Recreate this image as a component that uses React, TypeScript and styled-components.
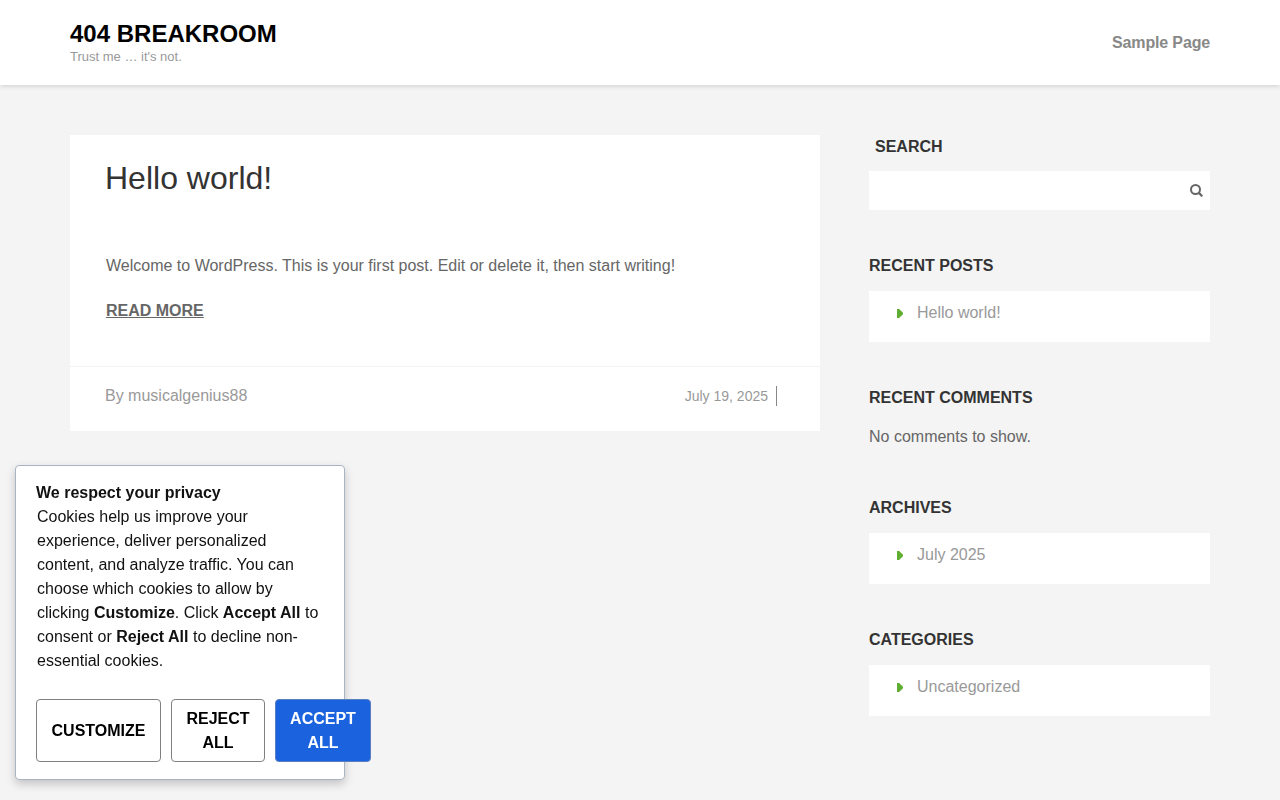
import React from "react";
import styled, { createGlobalStyle } from "styled-components";

const GlobalStyle = createGlobalStyle`
  * { box-sizing: border-box; }
  html, body { margin: 0; padding: 0; }
  body {
    background: #f4f4f4;
    font-family: "Liberation Sans", Arial, sans-serif;
    color: #5f5f5f;
  }
`;

const widgets = [
  { title: "RECENT POSTS", items: ["Hello world!"] },
  { title: "RECENT COMMENTS", text: "No comments to show." },
  { title: "ARCHIVES", items: ["July 2025"] },
  { title: "CATEGORIES", items: ["Uncategorized"] },
];

const SearchIcon = () => (
  <svg width="14" height="14" viewBox="0 0 14 14" fill="none" stroke="#666">
    <circle cx="6.5" cy="6.5" r="4.5" strokeWidth="2" />
    <path d="M10 10l2.6 2.6" strokeWidth="2.2" strokeLinecap="round" />
  </svg>
);

export default function App() {
  return (
    <>
      <GlobalStyle />
      <Header>
        <Brand>
          <SiteTitle>404 BREAKROOM</SiteTitle>
          <Tagline>Trust me … it's not.</Tagline>
        </Brand>
        <NavLink href="#">Sample Page</NavLink>
      </Header>

      <Page>
        <Main>
          <PostBody>
            <PostTitle>Hello world!</PostTitle>
            <Excerpt>
              Welcome to WordPress. This is your first post. Edit or delete it,
              then start writing!
            </Excerpt>
            <ReadMore href="#">READ MORE</ReadMore>
          </PostBody>
          <PostFooter>
            <Author>By musicalgenius88</Author>
            <PostDate>July 19, 2025</PostDate>
          </PostFooter>
        </Main>

        <Sidebar>
          <SearchWidget>
            <SearchTitle>SEARCH</SearchTitle>
            <SearchBox>
              <SearchIcon />
            </SearchBox>
          </SearchWidget>

          {widgets.map((w) => (
            <Widget key={w.title}>
              <WidgetTitle>{w.title}</WidgetTitle>
              {w.text && <WidgetText>{w.text}</WidgetText>}
              {w.items && (
                <WidgetList>
                  {w.items.map((item) => (
                    <WidgetItem key={item}>{item}</WidgetItem>
                  ))}
                </WidgetList>
              )}
            </Widget>
          ))}
        </Sidebar>
      </Page>

      <CookieBanner>
        <CookieHeading>We respect your privacy</CookieHeading>
        <CookieText>
          Cookies help us improve your experience, deliver personalized content,
          and analyze traffic. You can choose which cookies to allow by clicking{" "}
          <b>Customize</b>. Click <b>Accept All</b> to consent or{" "}
          <b>Reject All</b> to decline non-essential cookies.
        </CookieText>
        <CookieButtons>
          <CookieButton $width={125}>CUSTOMIZE</CookieButton>
          <CookieButton $width={94}>REJECT ALL</CookieButton>
          <CookieButton $width={96} $primary>
            ACCEPT ALL
          </CookieButton>
        </CookieButtons>
      </CookieBanner>
    </>
  );
}

const Header = styled.header`
  height: 85px;
  background: #fff;
  box-shadow: 0 1px 5px rgba(0, 0, 0, 0.15);
  display: flex;
  justify-content: space-between;
  align-items: flex-start;
  padding: 0 70px;
`;

const Brand = styled.div`
  padding-top: 19px;
`;

const SiteTitle = styled.div`
  font-size: 24px;
  line-height: 29px;
  font-weight: 700;
  color: #000;
`;

const Tagline = styled.div`
  font-size: 13px;
  line-height: 17px;
  color: #999;
`;

const NavLink = styled.a`
  margin-top: 34px;
  font-size: 16px;
  line-height: 18px;
  font-weight: 700;
  letter-spacing: -0.15px;
  color: #888;
  text-decoration: none;
`;

const Page = styled.div`
  display: flex;
  justify-content: space-between;
  align-items: flex-start;
  padding: 50px 70px 0;
`;

const Main = styled.main`
  width: 750px;
  background: #fff;
`;

const PostBody = styled.div`
  height: 232px;
  padding: 25px 35px 0;
  border-bottom: 1px solid #f3f3f3;
`;

const PostTitle = styled.h1`
  margin: 0 0 60px;
  font-size: 32px;
  line-height: 36px;
  font-weight: 400;
  color: #333;
`;

const Excerpt = styled.p`
  margin: 0 0 25px 1px;
  font-size: 16px;
  line-height: 20px;
  color: #666;
`;

const ReadMore = styled.a`
  margin-left: 1px;
  font-size: 16px;
  line-height: 20px;
  font-weight: 700;
  color: #666;
  text-decoration: underline;
`;

const PostFooter = styled.div`
  height: 64px;
  padding: 0 43px 7px 35px;
  display: flex;
  justify-content: space-between;
  align-items: center;
`;

const Author = styled.span`
  font-size: 16px;
  color: #999;
`;

const PostDate = styled.span`
  padding-right: 8px;
  border-right: 1px solid #888;
  font-size: 14px;
  line-height: 20px;
  color: #999;
`;

const Sidebar = styled.aside`
  width: 341px;
`;

const SearchWidget = styled.section`
  margin-bottom: 46px;
`;

const SearchTitle = styled.h2`
  margin: 2px 0 14px 6px;
  font-size: 16px;
  line-height: 20px;
  font-weight: 700;
  color: #333;
`;

const SearchBox = styled.div`
  height: 39px;
  padding: 0 7px 2px 0;
  background: #fff;
  display: flex;
  justify-content: flex-end;
  align-items: center;
`;

const Widget = styled.section`
  margin-bottom: 46px;
`;

const WidgetTitle = styled.h2`
  margin: 0 0 15px;
  font-size: 16px;
  line-height: 20px;
  font-weight: 700;
  color: #333;
`;

const WidgetText = styled.p`
  margin: 17px 0 0;
  padding-bottom: 3px;
  font-size: 16px;
  line-height: 24px;
  color: #666;
`;

const WidgetList = styled.ul`
  margin: 0;
  padding: 11px 0 18px 48px;
  list-style: none;
  background: #fff;
`;

const WidgetItem = styled.li`
  position: relative;
  font-size: 16px;
  line-height: 22px;
  color: #999;

  &::before {
    content: "";
    position: absolute;
    left: -20px;
    top: 7px;
    width: 6px;
    height: 9px;
    background: #5fae32;
    clip-path: polygon(0 0, 35% 0, 100% 42%, 100% 58%, 35% 100%, 0 100%);
  }
`;

const CookieBanner = styled.div`
  position: fixed;
  left: 15px;
  top: 465px;
  width: 330px;
  height: 315px;
  padding: 15px 20px;
  background: #fff;
  border: 1px solid #a9b4c2;
  border-radius: 4px;
  box-shadow: 0 4px 10px rgba(0, 0, 0, 0.2);
  color: #111;
  font-size: 16px;
  line-height: 24px;
`;

const CookieHeading = styled.div`
  font-weight: 700;
`;

const CookieText = styled.div`
  margin-left: 1px;
`;

const CookieButtons = styled.div`
  display: flex;
  gap: 10px;
  margin-top: 26px;
`;

const CookieButton = styled.button<{ $width: number; $primary?: boolean }>`
  flex: none;
  width: ${(p) => p.$width}px;
  height: 63px;
  padding: 0 12px;
  border: 1px solid ${(p) => (p.$primary ? "#5a7fc0" : "#808080")};
  border-radius: 4px;
  background: ${(p) => (p.$primary ? "#1a62de" : "#fff")};
  color: ${(p) => (p.$primary ? "#fff" : "#000")};
  font-family: inherit;
  font-size: 16px;
  line-height: 24px;
  font-weight: 700;
`;
